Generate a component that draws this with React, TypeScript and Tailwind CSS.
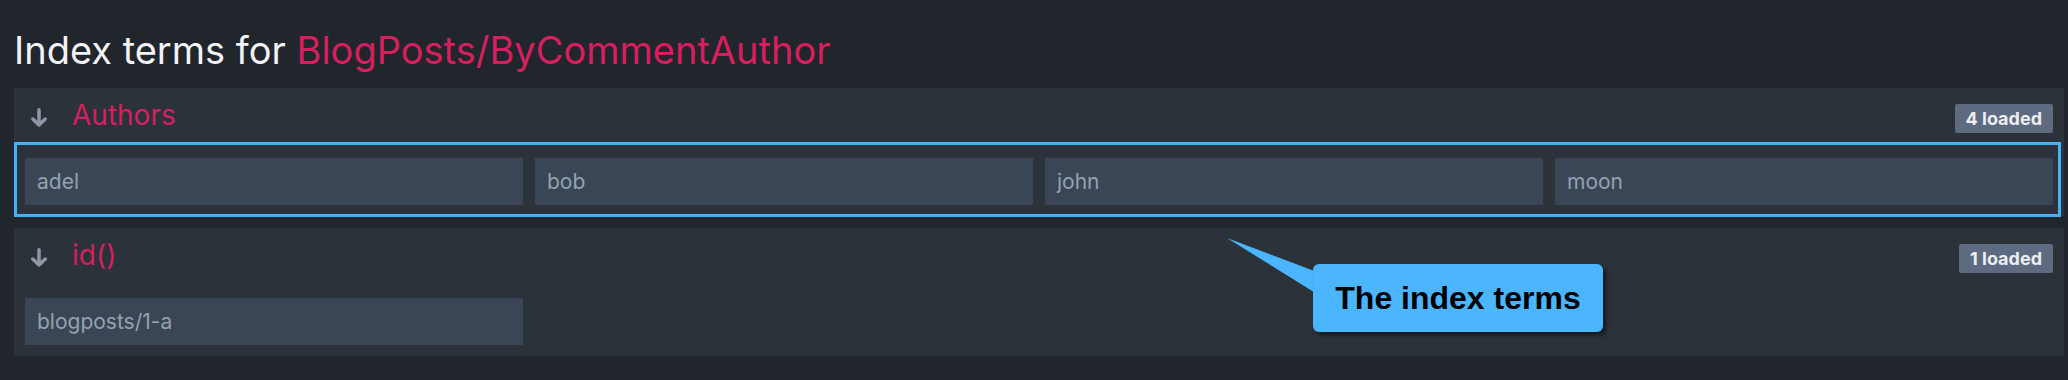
import React from "react";

type Section = {
  name: string;
  loaded: number;
  terms: string[];
  highlighted?: boolean;
};

const sections: Section[] = [
  { name: "Authors", loaded: 4, terms: ["adel", "bob", "john", "moon"], highlighted: true },
  { name: "id()", loaded: 1, terms: ["blogposts/1-a"] },
];

function DownArrow() {
  return (
    <svg width="18" height="20" viewBox="0 0 18 20" className="shrink-0">
      <path
        d="M9 1.8 V17 M2.8 11 L9 17 L15.2 11"
        fill="none"
        stroke="#8c98a8"
        strokeWidth="3.5"
        strokeLinecap="round"
        strokeLinejoin="round"
      />
    </svg>
  );
}

export default function App() {
  return (
    <div
      className="relative min-h-screen bg-[#21252c] pl-[14px] pr-[4px] pt-[28px]"
      style={{ fontFamily: "Inter, 'Noto Sans', sans-serif" }}
    >
      <h1 className="text-[38px] leading-[44px] font-normal text-[#f1f3f6] mb-[16px]">
        Index terms for <span className="text-[#d61f5e]">BlogPosts/ByCommentAuthor</span>
      </h1>

      <div className="flex flex-col gap-[12px]">
        {sections.map((section) => (
          <div key={section.name} className="relative bg-[#2b323a] px-[11px] pt-[14px] pb-[11px]">
            {/* Header */}
            <div className="flex h-[32px] items-center justify-between">
              <div className="flex items-center">
                <span className="ml-[5px] mr-[24px] flex items-center">
                  <DownArrow />
                </span>
                <span className="text-[28px] leading-none text-[#d61f5e] -mt-[6px]">
                  {section.name}
                </span>
              </div>
              <span className="rounded-[2px] bg-[#5e6a80] px-[11px] py-[3px] text-[18px] font-bold leading-[23px] text-[#eceef2]">
                {section.loaded} loaded
              </span>
            </div>

            {/* Terms */}
            <div className="mt-[24px] grid grid-cols-4 gap-[12px]">
              {section.terms.map((term) => (
                <div
                  key={term}
                  className="flex h-[47px] items-center bg-[#3a4655] pl-[12px] text-[21px] text-[#95a1b0]"
                >
                  {term}
                </div>
              ))}
            </div>

            {section.highlighted && (
              <div className="pointer-events-none absolute left-0 right-[3px] top-[54px] -bottom-[1px] border-[3px] border-[#45b1f7]" />
            )}
          </div>
        ))}
      </div>

      {/* Callout annotation */}
      <svg
        className="absolute left-[1225px] top-[236px]"
        width="95"
        height="62"
        viewBox="0 0 95 62"
      >
        <polygon points="2,2 92,36 92,58" fill="#4bb5fd" />
      </svg>
      <div
        className="absolute left-[1313px] top-[264px] flex h-[68px] w-[290px] items-center justify-center rounded-[6px] bg-[#4bb5fd] shadow-[3px_3px_4px_rgba(0,0,0,0.55)]"
        style={{ fontFamily: "'Liberation Sans', Arial, sans-serif" }}
      >
        <span className="text-[32px] font-bold text-black">The index terms</span>
      </div>
    </div>
  );
}
